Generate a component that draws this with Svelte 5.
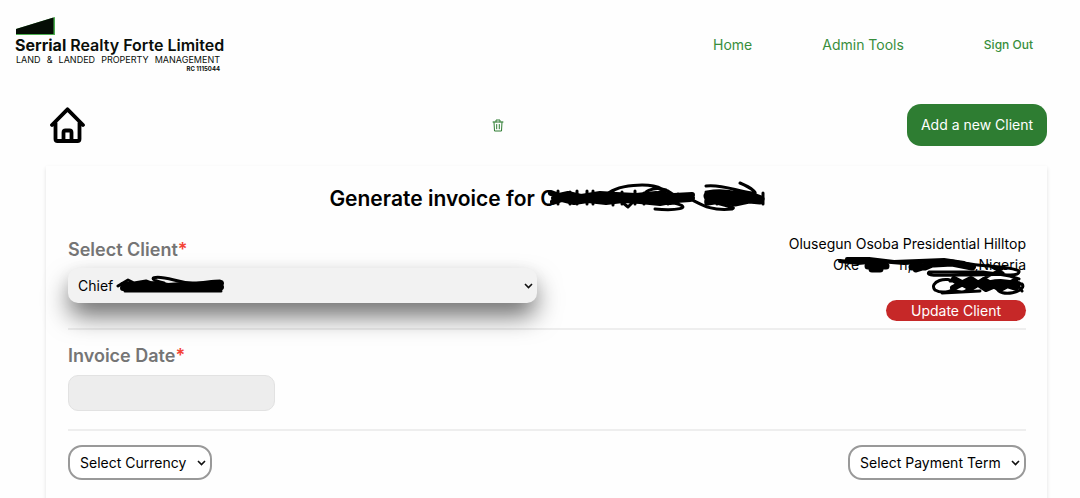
<script lang="ts">
	let client = $state('chief');
	let currency = $state('');
	let term = $state('');
	let invoiceDate = $state('');
</script>

<header>
	<a class="logo" href="/">
		<svg width="40" height="19" viewBox="0 0 40 19" aria-hidden="true">
			<path d="M1 13L40 1V19H1Z" fill="#4caf50" />
			<path d="M1 13L38.500 1.500V18H1Z" fill="#050d05" />
		</svg>
		<span class="name"><b>Serrial</b> Realty Forte Limited</span>
		<span class="tagline"><span>LAND</span><span>&amp;</span><span>LANDED</span><span>PROPERTY</span><span>MANAGEMENT</span></span>
		<span class="rc">RC 1115044</span>
	</a>
	<nav>
		<a href="/home">Home</a>
		<a href="/admin">Admin Tools</a>
		<button class="sign-out" type="button">Sign Out</button>
	</nav>
</header>

<main>
	<div class="toolbar">
		<a class="home" href="/home" aria-label="Home">
			<svg width="36" height="36" viewBox="0 0 36 36" fill="none" stroke="#000" stroke-width="3.8" stroke-linecap="round" stroke-linejoin="round">
				<path d="M2 18L17.500 2.300L33 18M5.500 16V32Q5.500 34 7.500 34H27.500Q29.500 34 29.500 32V16M13.500 34V25.500Q13.500 23.500 15.500 23.500H19.500Q21.500 23.500 21.500 25.500V34" />
			</svg>
		</a>
		<button class="trash" type="button" aria-label="Delete">
			<svg width="12" height="13" viewBox="0 0 12 13" fill="none" stroke="#2e7d32" stroke-linecap="round" stroke-linejoin="round">
				<path d="M1 3H11M4 3V1H8V3M2 3L2.500 12H9.500L10 3M4.700 5.500V9.800M7.300 5.500V9.800" />
			</svg>
		</button>
		<button class="add" type="button">Add a new Client</button>
	</div>

	<section class="card">
		<h1>
			Generate invoice for C<svg class="title-mark" width="221" height="32" viewBox="-12 0 221 32" aria-hidden="true">
				<path d="M-5 11L3 14L12 12L25 15L44 12L60 13L80 14L100 12L118 14L136 13M-3 20L6 17L18 20L32 18L50 20L67 18L84 19L104 21L120 18L134 17M-2 16H136" stroke-width="6" />
				<path d="M2 9V22M14 10V22M21 9V22M31 9V22M37 9V22M57 9V23M66 10V22M79 9V22M88 11V22M112 9V22M122 12V21" stroke-width="3" />
				<path d="M48 15C60 1 95 1 106 7C135 17 109 28 92 17C82 10 98 4 110 8C84 15 100 24 118 21C139 26 119 29 99 27M128 15C140 17 148 30 176 27C184 24 156 24 150 15M66 20L72 25L77 20" stroke-width="3" />
				<path d="M151 14L164 13L180 15L197 14L205 17M152 20L165 18L179 21L193 18L204 19M154 17H204" stroke-width="7" />
				<path d="M150 4C166 2 180 9 196 11C204 13 196 6 184 1M178 9L200 14M150 10V22M161 9V22M207 11V22M151 10Q168 7 183 12" stroke-width="3" />
			</svg>
		</h1>

		<div class="client-row">
			<div class="field">
				<label for="client">Select Client<span class="star">*</span></label>
				<div class="client-select">
					<select id="client" bind:value={client}>
						<option value="chief">Chief</option>
					</select>
					<svg class="client-mark" width="110" height="20" viewBox="0 0 110 20" aria-hidden="true">
						<path d="M7 10L27 10L40 9L52 11L66 10L80 11L105 8M7 13L22 13L40 13L60 14L80 13L105 12" stroke-width="6" />
						<path d="M2 11L12 5L18 8L30 6L38 9M48 8C28 3 38 0 58 5C78 11 90 6 104 6M9 16H105" stroke-width="3" />
					</svg>
				</div>
			</div>
			<address>
				<span>Olusegun Osoba Presidential Hilltop</span>
				<span class="line">Oke <i class="gap-a"></i>n,<i class="gap-b"></i>,Nigeria</span>
				<span class="line"></span>
				<svg class="address-mark" width="192" height="42" viewBox="0 0 192 42" aria-hidden="true">
					<path d="M6 6L24 8L45 6L70 8L105 6L128 8L140 12M13 4H35L60 7L110 5L130 8" stroke-width="4" />
					<path d="M34 11H52M38 14H46M78 12H91L98 9L82 14M100 9L118 8L138 12" stroke-width="7" />
					<path d="M130 8C150 12 178 11 185 16C186 23 165 19 149 17L95 17C90 22 113 20 126 20C153 21 165 16 185 24M149 24L168 14M154 10L169 18" stroke-width="3" />
					<path d="M120 24L137 33L150 25L166 34L181 26M119 33L137 24L152 34L166 28L182 33M124 29H184" stroke-width="6" />
					<path d="M101 35C94 27 113 20 122 28C123 37 108 39 101 35M118 34C139 45 139 22 116 26M145 30C164 22 180 27 188 29C194 37 165 43 163 33C167 22 185 28 188 36M108 38L146 36" stroke-width="3" />
				</svg>
				<button class="update" type="button">Update Client</button>
			</address>
		</div>

		<div class="date-row">
			<label for="date">Invoice Date<span class="star">*</span></label>
			<input id="date" type="text" bind:value={invoiceDate} />
		</div>

		<div class="terms-row">
			<select class="currency" aria-label="Currency" bind:value={currency}>
				<option value="">Select Currency</option>
			</select>
			<select class="term" aria-label="Payment term" bind:value={term}>
				<option value="">Select Payment Term</option>
			</select>
		</div>
	</section>
</main>

<style>
	:global(body) {
		margin: 0;
		background: #fefefe;
		color: #000;
		font-family: Inter, sans-serif;
		font-size: 14px;
	}

	button,
	select,
	input {
		font-family: inherit;
		font-size: 14px;
		box-sizing: border-box;
	}

	button {
		border: none;
		padding: 0;
		cursor: pointer;
	}

	select {
		appearance: none;
		color: #000;
		background-image: url("data:image/svg+xml,%3Csvg xmlns='http://www.w3.org/2000/svg' width='9' height='6' fill='none' stroke='%23111' stroke-width='1.6'%3E%3Cpath d='M1 1l3.500 3.500L8 1'/%3E%3C/svg%3E");
		background-repeat: no-repeat;
		background-position: right 4px center;
	}

	a {
		text-decoration: none;
	}

	header {
		display: flex;
		justify-content: space-between;
		align-items: center;
		padding: 16px 47px 0 15px;
	}

	.logo {
		display: flex;
		flex-direction: column;
		width: 205px;
		color: #0a0f0a;
	}

	.name {
		font-size: 16px;
		line-height: 20px;
		font-weight: 600;
		white-space: nowrap;
	}

	.name b {
		font-weight: 700;
	}

	.tagline {
		display: flex;
		justify-content: space-between;
		padding-left: 1px;
		font-size: 9px;
		line-height: 10px;
	}

	.rc {
		font-size: 6px;
		line-height: 8px;
		font-weight: 700;
		text-align: right;
	}

	nav {
		display: flex;
		align-items: center;
		gap: 70px;
	}

	nav a {
		color: #388e3c;
	}

	.sign-out {
		margin-left: 10px;
		background: none;
		color: #388e3c;
		font-size: 12px;
		font-weight: 500;
	}

	main {
		padding: 31px 33px 0 46px;
	}

	.toolbar {
		display: grid;
		grid-template-columns: 1fr auto 1fr;
		align-items: center;
	}

	.home {
		display: flex;
		padding-left: 4px;
	}

	.trash {
		display: flex;
		margin-right: 98px;
		background: none;
	}

	.add {
		justify-self: end;
		width: 140px;
		height: 42px;
		padding-bottom: 2px;
		border-radius: 14px;
		background: #2e7d32;
		color: #fff;
	}

	.card {
		margin-top: 20px;
		padding: 16px 21px 20px 22px;
		box-shadow: 0 2px 4px rgba(0, 0, 0, 0.12);
	}

	h1 {
		display: flex;
		justify-content: center;
		align-items: center;
		height: 32px;
		margin: 0;
		font-size: 21px;
		font-weight: 600;
		white-space: pre;
	}

	path {
		stroke-linecap: round;
		stroke-linejoin: round;
	}

	.title-mark,
	.client-mark,
	.address-mark {
		fill: none;
		stroke: #000;
	}

	.title-mark {
		margin-left: -12px;
		overflow: visible;
	}

	.client-row {
		display: flex;
		justify-content: space-between;
		padding: 19px 0 7px;
		border-bottom: 2px solid #eee;
	}

	label {
		display: block;
		color: #757575;
		font-size: 18px;
		line-height: 24px;
		font-weight: 600;
	}

	.star {
		color: #f44336;
	}

	.field {
		width: 49%;
		padding-top: 5px;
	}

	.client-select {
		position: relative;
		margin-top: 6px;
	}

	.client-select select {
		display: block;
		width: 100%;
		height: 35px;
		padding: 0 10px;
		border: none;
		border-radius: 10px;
		background-color: #f2f2f2;
		box-shadow:
			0 14px 26px -2px rgba(0, 0, 0, 0.6),
			0 2px 16px rgba(0, 0, 0, 0.04);
	}

	.client-mark {
		position: absolute;
		top: 7px;
		left: 48px;
	}

	address {
		position: relative;
		display: flex;
		flex-direction: column;
		align-items: flex-end;
		font-style: normal;
		line-height: 21px;
	}

	.line {
		height: 21px;
		white-space: pre;
	}

	.gap-a,
	.gap-b {
		display: inline-block;
		width: 36px;
	}

	.gap-b {
		width: 63px;
	}

	.address-mark {
		position: absolute;
		top: 22px;
		right: 0;
	}

	.update {
		width: 140px;
		height: 21px;
		margin-top: 4px;
		border-radius: 11px;
		background: #c62828;
		color: #fff;
	}

	.date-row {
		padding: 14px 0 18px;
		border-bottom: 2px solid #eee;
	}

	.date-row input {
		display: block;
		width: 207px;
		height: 36px;
		margin-top: 7px;
		border: 1px solid #e2e2e2;
		border-radius: 10px;
		background: #ededed;
	}

	.terms-row {
		display: flex;
		justify-content: space-between;
		padding-top: 14px;
	}

	.terms-row select {
		height: 35px;
		padding: 0 10px;
		border: 2px solid #999;
		border-radius: 14px;
		background-color: #fff;
	}

	.currency {
		width: 144px;
	}

	.term {
		width: 178px;
	}
</style>
